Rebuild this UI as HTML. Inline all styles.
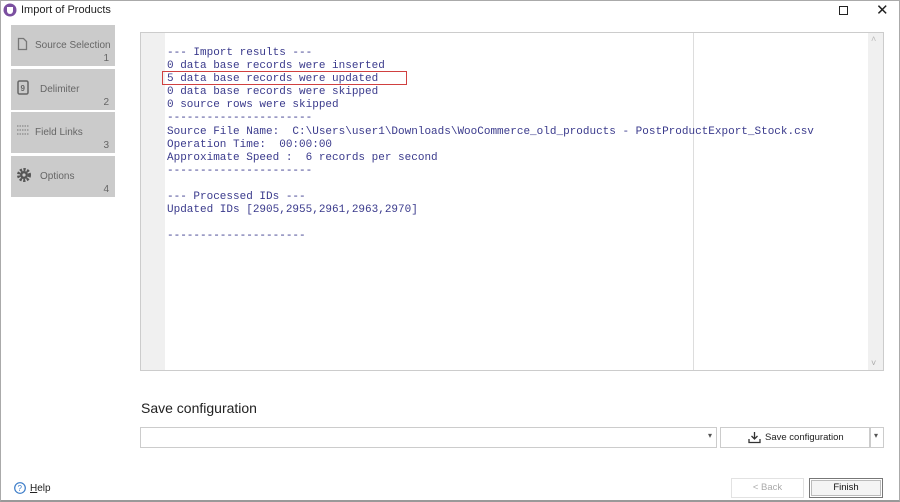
<!DOCTYPE html>
<html><head><style>
*{box-sizing:border-box;margin:0;padding:0}
body{width:900px;height:502px;background:#fff;font-family:"Liberation Sans",sans-serif;position:relative;overflow:hidden}
.win{position:absolute;left:0;top:0;width:900px;height:502px;border:1px solid #aaa;border-bottom:2px solid #999}
.title{position:absolute;left:21px;top:4px;font-size:11px;color:#222}
.nav{position:absolute;left:11px;width:104px;height:41px;background:#cbcbcb;color:#666;font-size:10px}
.nav .l{position:absolute;top:15px}
.nav .n{position:absolute;right:6px;bottom:2px;font-size:10px}
.panel{position:absolute;left:140px;top:32px;width:744px;height:339px;border:1px solid #ccc;background:#fff}
.gut{position:absolute;left:0;top:0;width:24px;height:100%;background:#f0f0f0}
.vl{position:absolute;left:552px;top:0;width:1px;height:100%;background:#ddd}
.sb{position:absolute;right:0;top:0;width:15px;height:100%;background:#f0f0f0}
pre{position:absolute;left:26px;top:14px;font-family:"Liberation Mono",monospace;font-size:11px;line-height:13.1px;color:#3a3a8c}
.hl{position:absolute;left:162px;top:71px;width:245px;height:14px;border:1.5px solid #d04040}
</style></head><body>
<div class="win"></div>
<svg style="position:absolute;left:3px;top:3px" width="14" height="14"><circle cx="7" cy="7" r="6.5" fill="#7b4fa0"/><path d="M4 4h6v4a3 3 0 0 1-6 0z" fill="#fff"/></svg>
<div class="title">Import of Products</div>
<div style="position:absolute;left:839px;top:6px;width:9px;height:9px;border:1.3px solid #222"></div>
<div style="position:absolute;left:876px;top:1px;font-size:15px;color:#222">✕</div>

<div class="nav" style="top:25px"><svg style="position:absolute;left:6px;top:12px" width="11" height="14"><path d="M1.5 1.5h5l3 3v8h-8z" fill="none" stroke="#777" stroke-width="1.3"/></svg><span class="l" style="left:24px">Source Selection</span><span class="n">1</span></div>
<div class="nav" style="top:69px"><svg style="position:absolute;left:6px;top:11px" width="12" height="16"><rect x="1" y="1" width="10" height="13" rx="1.5" fill="none" stroke="#666" stroke-width="1.5"/><text x="3.5" y="11" font-size="8" fill="#666" font-weight="bold">9</text></svg><span class="l" style="left:29px">Delimiter</span><span class="n">2</span></div>
<div class="nav" style="top:112px"><svg style="position:absolute;left:5px;top:13px" width="14" height="10"><path d="M1 1h12M1 5h12M1 9h12" stroke="#777" stroke-dasharray="1.5 1" fill="none"/></svg><span class="l" style="left:24px">Field Links</span><span class="n">3</span></div>
<div class="nav" style="top:156px"><svg style="position:absolute;left:5px;top:11px" width="16" height="16"><circle cx="8" cy="8" r="5.5" fill="none" stroke="#555" stroke-width="3" stroke-dasharray="2.2 1.4"/><circle cx="8" cy="8" r="4" fill="#555"/><circle cx="8" cy="8" r="1.6" fill="#cbcbcb"/></svg><span class="l" style="left:29px">Options</span><span class="n">4</span></div>

<div class="panel"><div class="gut"></div><div class="vl"></div><div class="sb"><span style="position:absolute;left:3px;top:1px;font-size:9px;color:#bbb">˄</span><span style="position:absolute;left:3px;bottom:2px;font-size:9px;color:#aaa">˅</span></div>
<pre>--- Import results ---
0 data base records were inserted
5 data base records were updated
0 data base records were skipped
0 source rows were skipped
----------------------
Source File Name:  C:\Users\user1\Downloads\WooCommerce_old_products - PostProductExport_Stock.csv
Operation Time:  00:00:00
Approximate Speed :  6 records per second
----------------------

--- Processed IDs ---
Updated IDs [2905,2955,2961,2963,2970]

---------------------</pre></div>
<div class="hl"></div>

<div style="position:absolute;left:141px;top:400px;font-size:14px;color:#222">Save configuration</div>
<div style="position:absolute;left:140px;top:427px;width:577px;height:21px;border:1px solid #ccc"><span style="position:absolute;right:4px;top:3px;font-size:8px;color:#555">▾</span></div>
<div style="position:absolute;left:720px;top:427px;width:150px;height:21px;border:1px solid #ccc;font-size:9.5px;color:#222"><svg style="position:absolute;left:27px;top:3px" width="13" height="13"><path d="M6.5 1v7M3.5 5l3 3 3-3M1 8v3.5h11V8" fill="none" stroke="#333" stroke-width="1.3"/></svg><span style="position:absolute;left:44px;top:4px">Save configuration</span></div>
<div style="position:absolute;left:870px;top:427px;width:14px;height:21px;border:1px solid #ccc"><span style="position:absolute;left:3px;top:3px;font-size:8px;color:#555">▾</span></div>

<svg style="position:absolute;left:14px;top:482px" width="12" height="12"><circle cx="6" cy="6" r="5.3" fill="none" stroke="#3a7bc8" stroke-width="1.2"/><text x="3.5" y="9" font-size="8" fill="#3a7bc8">?</text></svg>
<div style="position:absolute;left:30px;top:483px;font-size:10px;color:#222"><u>H</u>elp</div>

<div style="position:absolute;left:731px;top:478px;width:73px;height:20px;border:1px solid #e2e2e2;font-size:9.5px;color:#aaa;text-align:center;line-height:18px">&lt; Back</div>
<div style="position:absolute;left:809px;top:478px;width:74px;height:20px;border:1px solid #777;background:#f4f4f4;font-size:9.5px;color:#111;text-align:center;line-height:18px;box-shadow:inset 0 0 0 1px #fff,inset 0 0 0 2px #bbb">Finish</div>
</body></html>
